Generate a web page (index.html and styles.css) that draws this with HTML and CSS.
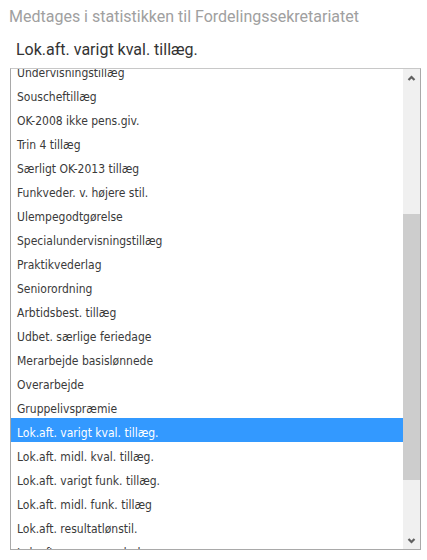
FILE: index.html
```html
<!DOCTYPE html>
<html lang="da">
<head>
    <meta charset="UTF-8">
    <meta name="viewport" content="width=device-width, initial-scale=1.0">
    <title>Løntillæg</title>
    <link rel="stylesheet" href="styles.css">
</head>
<body>
    <div class="field">
        <p class="hint">Medtages i statistikken til Fordelingssekretariatet</p>
        <p class="current">Lok.aft. varigt kval. tillæg.</p>

        <div class="listbox">
            <ul class="options">
                <li>Undervisningstillæg</li>
                <li>Souscheftillæg</li>
                <li>OK-2008 ikke pens.giv.</li>
                <li>Trin 4 tillæg</li>
                <li>Særligt OK-2013 tillæg</li>
                <li>Funkveder. v. højere stil.</li>
                <li>Ulempegodtgørelse</li>
                <li>Specialundervisningstillæg</li>
                <li>Praktikvederlag</li>
                <li>Seniorordning</li>
                <li>Arbtidsbest. tillæg</li>
                <li>Udbet. særlige feriedage</li>
                <li>Merarbejde basislønnede</li>
                <li>Overarbejde</li>
                <li>Gruppelivspræmie</li>
                <li class="selected">Lok.aft. varigt kval. tillæg.</li>
                <li>Lok.aft. midl. kval. tillæg.</li>
                <li>Lok.aft. varigt funk. tillæg.</li>
                <li>Lok.aft. midl. funk. tillæg</li>
                <li>Lok.aft. resultatlønstil.</li>
                <li>Lok.aft. engangsvederlag</li>
            </ul>
            <div class="scrollbar">
                <div class="arrow">
                    <svg width="9" height="6" viewBox="0 0 9 6"><path d="M1.5 5 L4.5 2 L7.5 5" fill="none" stroke="#606060" stroke-width="2.2"/></svg>
                </div>
                <div class="track">
                    <div class="thumb"></div>
                </div>
                <div class="arrow">
                    <svg width="9" height="6" viewBox="0 0 9 6"><path d="M1.5 1 L4.5 4 L7.5 1" fill="none" stroke="#606060" stroke-width="2.2"/></svg>
                </div>
            </div>
        </div>
    </div>
</body>
</html>
```

FILE: styles.css
```css
body {
    margin: 0;
    padding: 0;
    background-color: #fff;
    font-family: Roboto, "Noto Sans", sans-serif;
}

.field {
    padding: 6px 6px 0 10px;
}

.hint {
    margin: 0 0 0 -1px;
    font-size: 16px;
    line-height: 22px;
    color: #a0a0a0;
}

.current {
    margin: 11px 0 7px 6px;
    font-size: 16px;
    line-height: 22px;
    color: #333;
}

.listbox {
    display: flex;
    height: 480px;
    border: 1px solid #a9a9a9;
    border-top-color: #c8c8c8;
    overflow: hidden;
}

.options {
    flex: 1;
    list-style: none;
    margin: -11px 0 0 0;
    padding: 0;
    font-family: "DejaVu Sans Condensed", "DejaVu Sans", sans-serif;
    font-size: 12px;
    color: #3a3a3a;
}

.options li {
    height: 21px;
    padding-top: 3px;
    line-height: 24px;
    padding-left: 6px;
    white-space: nowrap;
}

.options li.selected {
    background-color: #3399ff;
    color: #fff;
}

.scrollbar {
    width: 17px;
    display: flex;
    flex-direction: column;
    background-color: #f0f0f0;
}

.arrow {
    height: 17px;
    display: flex;
    align-items: center;
    justify-content: center;
}

.track {
    flex: 1;
    padding-top: 128px;
}

.thumb {
    height: 266px;
    background-color: #cdcdcd;
}
```
